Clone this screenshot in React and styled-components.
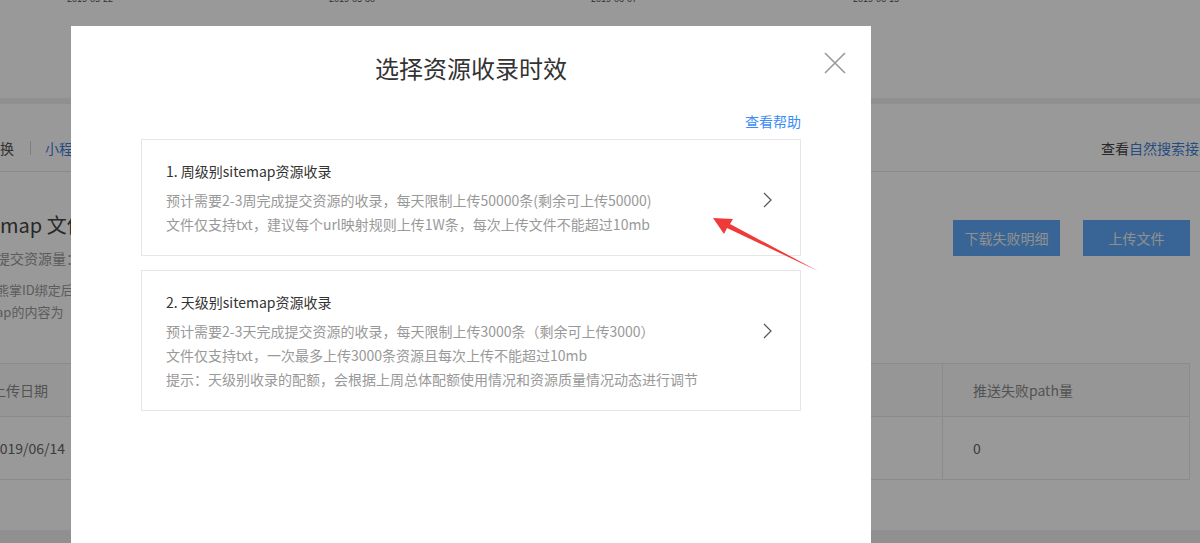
import React from 'react';
import styled, { createGlobalStyle } from 'styled-components';

const GlobalStyle = createGlobalStyle`
  html, body { margin: 0; padding: 0; }
  body {
    background: #f1f1f1;
    font-family: "Noto Sans CJK SC", "Noto Sans", sans-serif;
    overflow: hidden;
  }
  * { box-sizing: border-box; }
`;

const Page = styled.div`
  width: 1200px;
  height: 543px;
  overflow: hidden;
  display: flex;
  flex-direction: column;
  gap: 6px;
`;

const ChartSection = styled.section`
  height: 98px;
  flex-shrink: 0;
  background: #fff;
  overflow: hidden;
`;

const AxisRow = styled.div`
  display: flex;
  margin-top: -7px;
  padding-left: 67px;
  font-family: "Liberation Sans", Arial, sans-serif;
  font-size: 9px;
  line-height: 12px;
  color: #555;
`;

const AxisLabel = styled.span`
  width: 262px;
  flex-shrink: 0;
`;

const MainCard = styled.section`
  height: 426px;
  flex-shrink: 0;
  margin-right: -41px;
  background: #fff;
`;

const TabBar = styled.div`
  display: flex;
  align-items: center;
  padding: 34px 0 13px;
  border-bottom: 1px solid #e8e8e8;
  font-size: 14px;
  line-height: 20px;
  white-space: nowrap;
`;

const Tab = styled.span`
  color: ${(p) => (p.$active ? '#3f7fd8' : '#555')};
`;

const TabDivider = styled.span`
  width: 1px;
  height: 14px;
  background: #d0d0d0;
  margin: 0 14px 0 16px;
`;

const TabRight = styled.span`
  margin-left: auto;
  color: #444;
`;

const Link = styled.span`
  color: #3f7fd8;
`;

const Summary = styled.div`
  display: flex;
  justify-content: space-between;
  align-items: flex-start;
  padding: 39px 51px 0 0;
`;

const Info = styled.div`
  display: flex;
  flex-direction: column;
`;

const Heading = styled.h2`
  margin: 0;
  font-size: 20px;
  line-height: 28px;
  font-weight: normal;
  color: #444;
`;

const Stat = styled.div`
  margin: 9px 0 0 -4px;
  font-size: 14px;
  line-height: 20px;
  color: #999;
`;

const Notes = styled.div`
  margin: 11px 0 0 -4px;
  font-size: 13px;
  line-height: 22px;
  color: #999;
`;

const Actions = styled.div`
  display: flex;
  gap: 23px;
  margin-top: 9px;
`;

const Button = styled.button`
  width: 107px;
  height: 36px;
  border: none;
  border-radius: 0;
  background: #5ea8f8;
  color: #f0f0f0;
  font-family: inherit;
  font-size: 14px;
`;

const Table = styled.div`
  margin: 40px 51px 0 -39px;
  border: 1px solid #e8e8e8;
  display: grid;
  grid-template-columns: 1fr 1fr 1fr 247px;
`;

const Cell = styled.div`
  display: flex;
  align-items: center;
  padding-left: 30px;
  height: ${(p) => (p.$head ? '53px' : '62px')};
  font-size: 14px;
  color: ${(p) => (p.$head ? '#8a8a8a' : '#666')};
  background: ${(p) => (p.$head ? '#fafafa' : '#fff')};
  border-bottom: ${(p) => (p.$head ? '1px solid #e8e8e8' : 'none')};
  border-left: ${(p) => (p.$first ? 'none' : '1px solid #e8e8e8')};
  white-space: nowrap;
`;

const Overlay = styled.div`
  position: fixed;
  inset: 0;
  background: rgba(0, 0, 0, 0.4);
  display: flex;
  align-items: flex-start;
  padding: 26px 0 0 71px;
`;

const Modal = styled.div`
  position: relative;
  width: 800px;
  height: 560px;
  flex-shrink: 0;
  background: #fff;
  padding: 26px 70px 0;
`;

const Title = styled.h1`
  margin: 0;
  text-align: center;
  font-size: 24px;
  line-height: 32px;
  font-weight: normal;
  color: #333;
`;

const CloseButton = styled.button`
  position: absolute;
  top: 26px;
  right: 25px;
  width: 22px;
  height: 22px;
  padding: 0;
  border: none;
  background: transparent;
  display: flex;
`;

const HelpRow = styled.div`
  margin-top: 27px;
  text-align: right;
  font-size: 14px;
  line-height: 20px;
  color: #3a8cf7;
`;

const CardList = styled.div`
  margin-top: 8px;
  display: flex;
  flex-direction: column;
  gap: 14px;
`;

const Card = styled.div`
  border: 1px solid #e6e6e6;
  padding: 20px 28px 19px 24px;
  display: grid;
  grid-template-columns: 1fr auto;
`;

const CardTitle = styled.div`
  grid-column: 1 / -1;
  font-size: 14px;
  line-height: 22px;
  color: #333;
`;

const CardDesc = styled.div`
  margin-top: 6px;
  font-size: 14px;
  line-height: 24px;
  color: #999;
`;

const Chevron = styled.div`
  margin-top: 6px;
  height: 24px;
  display: flex;
  align-items: center;
`;

const Annotation = styled.svg`
  position: absolute;
  left: 637px;
  top: 186px;
`;

const ChevronIcon = () => (
  <svg width="9" height="16" viewBox="0 0 9 16">
    <polyline points="1,1 8,8 1,15" fill="none" stroke="#555" strokeWidth="1.2" />
  </svg>
);

const cards = [
  {
    title: '1. 周级别sitemap资源收录',
    lines: [
      '预计需要2-3周完成提交资源的收录，每天限制上传50000条(剩余可上传50000)',
      '文件仅支持txt，建议每个url映射规则上传1W条，每次上传文件不能超过10mb',
    ],
  },
  {
    title: '2. 天级别sitemap资源收录',
    lines: [
      '预计需要2-3天完成提交资源的收录，每天限制上传3000条（剩余可上传3000）',
      '文件仅支持txt，一次最多上传3000条资源且每次上传不能超过10mb',
      '提示：天级别收录的配额，会根据上周总体配额使用情况和资源质量情况动态进行调节',
    ],
  },
];

export default function App() {
  return (
    <>
      <GlobalStyle />
      <Page>
        <ChartSection>
          <AxisRow>
            {['2019-05-22', '2019-05-30', '2019-06-07', '2019-06-15'].map((d) => (
              <AxisLabel key={d}>{d}</AxisLabel>
            ))}
          </AxisRow>
        </ChartSection>
        <MainCard>
          <TabBar>
            <Tab>换</Tab>
            <TabDivider />
            <Tab $active>小程序</Tab>
            <TabRight>
              查看<Link>自然搜索接入规范</Link>
            </TabRight>
          </TabBar>
          <Summary>
            <Info>
              <Heading>map 文件</Heading>
              <Stat>提交资源量：</Stat>
              <Notes>
                <div>熊掌ID绑定后</div>
                <div>ap的内容为</div>
              </Notes>
            </Info>
            <Actions>
              <Button>下载失败明细</Button>
              <Button>上传文件</Button>
            </Actions>
          </Summary>
          <Table>
            <Cell $head $first>上传日期</Cell>
            <Cell $head />
            <Cell $head />
            <Cell $head>推送失败path量</Cell>
            <Cell $first>2019/06/14</Cell>
            <Cell />
            <Cell />
            <Cell>0</Cell>
          </Table>
        </MainCard>
      </Page>
      <Overlay>
        <Modal>
          <Title>选择资源收录时效</Title>
          <CloseButton aria-label="关闭">
            <svg width="22" height="22" viewBox="0 0 22 22">
              <path d="M1 1 L21 21 M21 1 L1 21" stroke="#999" strokeWidth="1.6" fill="none" />
            </svg>
          </CloseButton>
          <HelpRow>查看帮助</HelpRow>
          <CardList>
            {cards.map((c) => (
              <Card key={c.title}>
                <CardTitle>{c.title}</CardTitle>
                <CardDesc>
                  {c.lines.map((l) => (
                    <div key={l}>{l}</div>
                  ))}
                </CardDesc>
                <Chevron>
                  <ChevronIcon />
                </Chevron>
              </Card>
            ))}
          </CardList>
          <Annotation width="115" height="64" viewBox="0 0 115 64">
            <polygon points="5,6 25,7 22,12 110,59 19,16 16,22" fill="#f03a3a" />
          </Annotation>
        </Modal>
      </Overlay>
    </>
  );
}
